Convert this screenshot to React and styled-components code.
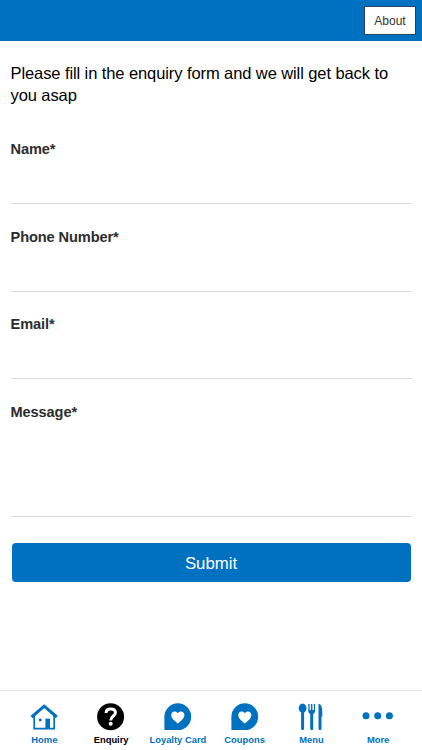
import styled, { createGlobalStyle } from "styled-components";

const GlobalStyle = createGlobalStyle`
  * {
    box-sizing: border-box;
    margin: 0;
    padding: 0;
  }

  body {
    background-color: #fff;
    font-family: "Liberation Sans", Arial, sans-serif;
  }
`;

const Screen = styled.div`
  display: flex;
  flex-direction: column;
  height: 100vh;
  min-height: 750px;
  overflow: hidden;
`;

const Header = styled.header`
  display: flex;
  flex: none;
  justify-content: flex-end;
  align-items: center;
  height: 41px;
  padding-right: 6px;
  background-color: #0070c0;
`;

const AboutButton = styled.button`
  width: 52px;
  height: 29px;
  border: 1px solid #24435c;
  background-color: #fff;
  color: #333;
  font-family: inherit;
  font-size: 12px;
`;

const Content = styled.main`
  flex: 1;
  padding: 20.5px 10.5px 0 10.5px;
`;

const Intro = styled.p`
  color: #000;
  font-size: 16.5px;
  letter-spacing: -0.09px;
  line-height: 22.5px;
`;

const Form = styled.form`
  display: flex;
  flex-direction: column;
  padding-top: 31.5px;
`;

const Field = styled.label`
  display: flex;
  flex-direction: column;
  height: ${({ $tall }) => ($tall ? "137.5px" : "87.5px")};

  span {
    color: #2d2d2d;
    font-size: 14.6px;
    font-weight: bold;
    letter-spacing: -0.1px;
    line-height: 22px;
  }

  input,
  textarea {
    height: ${({ $tall }) => ($tall ? "94px" : "44px")};
    border: none;
    border-bottom: 1px solid #dadada;
    background-color: transparent;
    font: inherit;
    outline: none;
    resize: none;
  }
`;

const Submit = styled.button`
  height: 38.5px;
  margin: 5px 1px 0 1px;
  border: none;
  border-radius: 4px;
  background-color: #0070c0;
  color: #fff;
  font-family: inherit;
  font-size: 16.8px;
  line-height: 38px;
  padding-top: 2px;
`;

const TabBar = styled.nav`
  display: grid;
  flex: none;
  grid-template-columns: repeat(6, 1fr);
  height: 60px;
  padding: 12px 10.5px 0 11px;
  border-top: 1px solid #e4e4e4;
`;

const Tab = styled.a`
  display: flex;
  flex-direction: column;
  align-items: center;
  color: ${({ $active }) => ($active ? "#000" : "#0070c0")};
  font-size: 9.4px;
  font-weight: bold;
  line-height: 12px;
  white-space: nowrap;

  svg {
    flex: none;
    width: 28px;
    height: 28px;
    margin-bottom: 3px;
  }
`;

const MoreTab = styled(Tab)`
  svg {
    width: 32px;
  }
`;

const HomeIcon = () => (
  <svg viewBox="0 0 28 28" fill="none" stroke="currentColor" strokeWidth="1.7">
    <path d="M4.2 13V25.6H24.2V13" />
    <path d="M1.6 14L14.2 3.2L26.8 14" strokeWidth="3" />
    <path d="M15.4 15.6H20V25.6H15.4Z" fill="currentColor" stroke="none" />
    <path d="M9 15.7H11.6V18.3H9Z" fill="currentColor" stroke="none" />
  </svg>
);

const QuestionIcon = () => (
  <svg viewBox="0 0 28 28" fill="none">
    <circle cx="13.6" cy="13.8" r="13.5" fill="currentColor" />
    <path
      d="M9 10C9.2 7.4 11.2 6.1 13.8 6.1C16.6 6.1 18.4 7.6 18.4 9.8C18.4 13 13.7 13.1 13.7 17.4"
      stroke="#fff"
      strokeWidth="3"
    />
    <circle cx="13.7" cy="20.7" r="2" fill="#fff" />
  </svg>
);

const HeartIcon = () => (
  <svg viewBox="0 0 28 28">
    <path d="M13.8 .3A13.4 13.4 0 0 1 13.8 27.1H.4V13.7A13.4 13.4 0 0 1 13.8 .3Z" fill="currentColor" />
    <path
      d="M13.8 20.5C11.3 18.4 7.2 15.4 7.2 12C7.2 8.2 11.9 7.1 13.8 10.3C15.7 7.1 20.4 8.2 20.4 12C20.4 15.4 16.3 18.4 13.8 20.5Z"
      fill="#fff"
    />
  </svg>
);

const CutleryIcon = () => (
  <svg viewBox="0 0 28 28" fill="currentColor">
    <path d="M5.6 .6C7.9 .6 9.5 2.8 9.5 5.3C9.5 7.3 8.5 8.7 7.1 9.4V25.4C7.1 27.4 4.1 27.4 4.1 25.4V9.4C2.7 8.7 1.7 7.3 1.7 5.3C1.7 2.8 3.3 .6 5.6 .6Z" />
    <path d="M11.3 1H12.6V7H14V1H15.4V7H16.8V1H18.1V8.1C18.1 9.6 17.3 10.5 16.2 10.9V25.4C16.2 27.4 13.2 27.4 13.2 25.4V10.9C12.1 10.5 11.3 9.6 11.3 8.1Z" />
    <path d="M21.5 .8C23.9 1 25.3 4 25.3 9V13.6H24.5V25.4C24.5 27.4 21.5 27.4 21.5 25.4Z" />
  </svg>
);

const DotsIcon = () => (
  <svg viewBox="0 0 32 28" fill="currentColor">
    <circle cx="4" cy="12.8" r="3.5" />
    <circle cx="15.7" cy="12.8" r="3.5" />
    <circle cx="27.4" cy="12.8" r="3.5" />
  </svg>
);

const App = () => {
  return (
    <>
      <GlobalStyle />
      <Screen>
        <Header>
          <AboutButton type="button">About</AboutButton>
        </Header>

        <Content>
          <Intro>
            Please fill in the enquiry form and we will get back to
            <br />
            you asap
          </Intro>
          <Form onSubmit={(e) => e.preventDefault()}>
            <Field>
              <span>Name*</span>
              <input type="text" name="name" required />
            </Field>
            <Field>
              <span>Phone Number*</span>
              <input type="tel" name="phone" required />
            </Field>
            <Field>
              <span>Email*</span>
              <input type="email" name="email" required />
            </Field>
            <Field $tall>
              <span>Message*</span>
              <textarea name="message" required />
            </Field>
            <Submit type="submit">Submit</Submit>
          </Form>
        </Content>

        <TabBar>
          <Tab>
            <HomeIcon />
            Home
          </Tab>
          <Tab $active>
            <QuestionIcon />
            Enquiry
          </Tab>
          <Tab>
            <HeartIcon />
            Loyalty Card
          </Tab>
          <Tab>
            <HeartIcon />
            Coupons
          </Tab>
          <Tab>
            <CutleryIcon />
            Menu
          </Tab>
          <MoreTab>
            <DotsIcon />
            More
          </MoreTab>
        </TabBar>
      </Screen>
    </>
  );
};

export default App;
